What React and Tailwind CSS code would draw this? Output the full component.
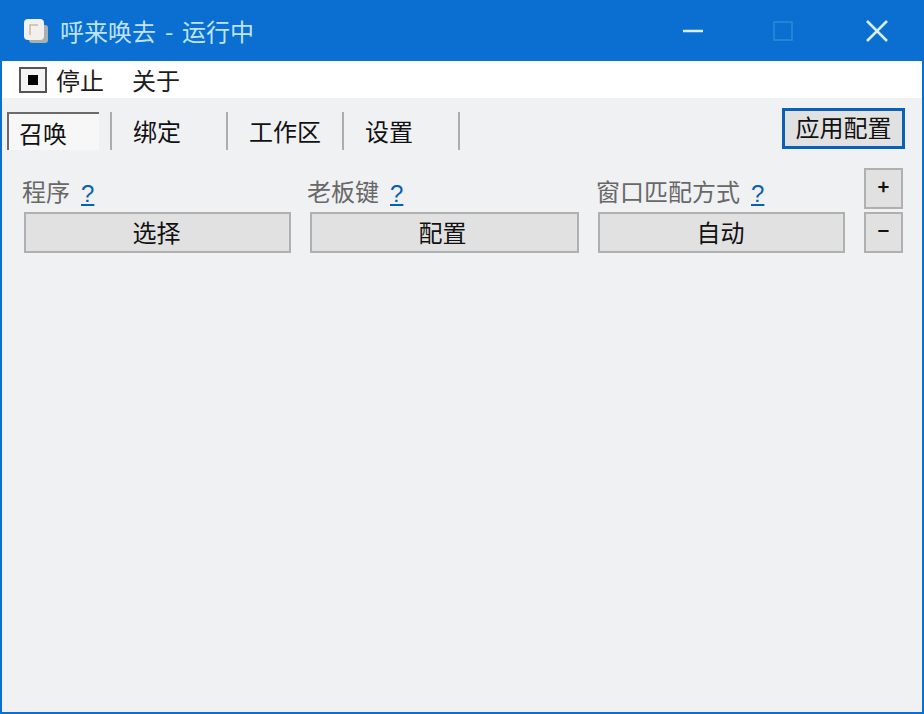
import React from 'react';

const Help = () => (
  <span className="ml-[11px] text-[24px] leading-none text-[#0a5fb0] underline underline-offset-2 font-['Liberation_Sans',sans-serif]">?</span>
);

const FieldLabel = ({ children }) => (
  <div className="flex h-[44px] items-end pb-[6px] text-[24px] leading-[30px] text-[#686868]">
    <span>{children}</span>
    <Help />
  </div>
);

const FlatButton = ({ className = '', children }) => (
  <button className={`flex items-center justify-center border-2 border-[#b0b0b0] bg-[#e1e1e1] pb-[2px] text-[24px] leading-none text-[#111] ${className}`}>
    {children}
  </button>
);

const Tab = ({ active, width, children }) => (
  <div className={`flex h-[38px] items-center ${width}`}>
    {active ? (
      <div className="flex h-full w-[92px] items-center border-t-2 border-l-2 border-[#6b6b6b] bg-[#f7f7f7] pl-[10px] pt-[1px] text-[24px] leading-none text-[#111]">
        {children}
      </div>
    ) : (
      <span className="pl-[21px] text-[24px] leading-none text-[#111]">{children}</span>
    )}
  </div>
);

const Separator = () => <div className="h-[38px] w-[2px] bg-[#adadad]" />;

const App = () => {
  return (
    <div className="flex h-[714px] w-[924px] flex-col overflow-hidden border-x-2 border-b-2 border-[#0a6fd0] bg-[#f0f1f3] font-['Noto_Sans_CJK_SC','Noto_Sans',sans-serif]">
      {/* Title bar */}
      <div className="flex h-[61px] shrink-0 items-center bg-[#0a6fd0] pl-[20px]">
        <svg width="28" height="28" viewBox="0 0 28 28" fill="none">
          <rect x="7" y="8" width="19" height="18" rx="3" fill="#a9b0b4" />
          <rect x="2" y="2" width="20" height="21" rx="4" fill="#f2f0ec" />
          <path d="M8 18V8h8" stroke="#c9b9a6" strokeWidth="1.5" />
        </svg>
        <span className="ml-[10px] text-[24px] leading-none text-[#bfe3fa] [word-spacing:3.5px]">呼来唤去 - 运行中</span>
        <div className="ml-auto flex items-center pr-[34px]">
          <svg width="22" height="22" viewBox="0 0 22 22" className="mr-[68px]">
            <path d="M1 11h20" stroke="#d8f0fd" strokeWidth="2.5" />
          </svg>
          <svg width="22" height="22" viewBox="0 0 22 22" className="mr-[72px]">
            <rect x="2" y="2" width="18" height="18" fill="none" stroke="#2f8ad8" strokeWidth="1.5" />
          </svg>
          <svg width="22" height="22" viewBox="0 0 22 22">
            <path d="M1 1l20 20M21 1L1 21" stroke="#d8f0fd" strokeWidth="2.5" />
          </svg>
        </div>
      </div>

      {/* Menu bar */}
      <div className="flex h-[37px] shrink-0 items-center bg-white pl-[17px] text-[24px] leading-none text-[#1c1c1c]">
        <div className="flex h-[26px] w-[28px] items-center justify-center border-2 border-[#555] bg-[#f4f4f4]">
          <div className="h-[10px] w-[10px] bg-black" />
        </div>
        <span className="ml-[9px]">停止</span>
        <span className="ml-[28px]">关于</span>
      </div>

      {/* Tabs and apply button */}
      <div className="flex shrink-0 items-start pl-[5px] pr-[17px] pt-[10px]">
        <div className="mt-[4px] flex items-center">
          <Tab active width="w-[103px]">召唤</Tab>
          <Separator />
          <Tab width="w-[114px]">绑定</Tab>
          <Separator />
          <Tab width="w-[114px]">工作区</Tab>
          <Separator />
          <Tab width="w-[114px]">设置</Tab>
          <Separator />
        </div>
        <button className="ml-auto flex h-[41px] w-[123px] items-center justify-center border-[3px] border-[#0a62b8] bg-[#e1e1e1] pb-[3px] text-[24px] leading-none text-[#111]">
          应用配置
        </button>
      </div>

      {/* Rule row */}
      <div className="flex items-start gap-[19px] pl-[22px] pr-[19px] pt-[18px]">
        <div className="w-[267px]">
          <div className="-ml-[2px]"><FieldLabel>程序</FieldLabel></div>
          <FlatButton className="h-[41px] w-full pr-[2px]">选择</FlatButton>
        </div>
        <div className="w-[269px]">
          <div className="-ml-[3px]"><FieldLabel>老板键</FieldLabel></div>
          <FlatButton className="h-[41px] w-full pr-[4px]">配置</FlatButton>
        </div>
        <div className="w-[247px]">
          <div className="-ml-[2px]"><FieldLabel>窗口匹配方式</FieldLabel></div>
          <FlatButton className="h-[41px] w-full pr-[2px]">自动</FlatButton>
        </div>
        <div className="flex w-[39px] flex-col gap-[3px]">
          <FlatButton className="h-[41px] w-full !pb-[5px] font-bold !text-[20px]">+</FlatButton>
          <FlatButton className="h-[41px] w-full !pb-[5px] font-bold !text-[20px]">−</FlatButton>
        </div>
      </div>
    </div>
  );
};

export default App;
